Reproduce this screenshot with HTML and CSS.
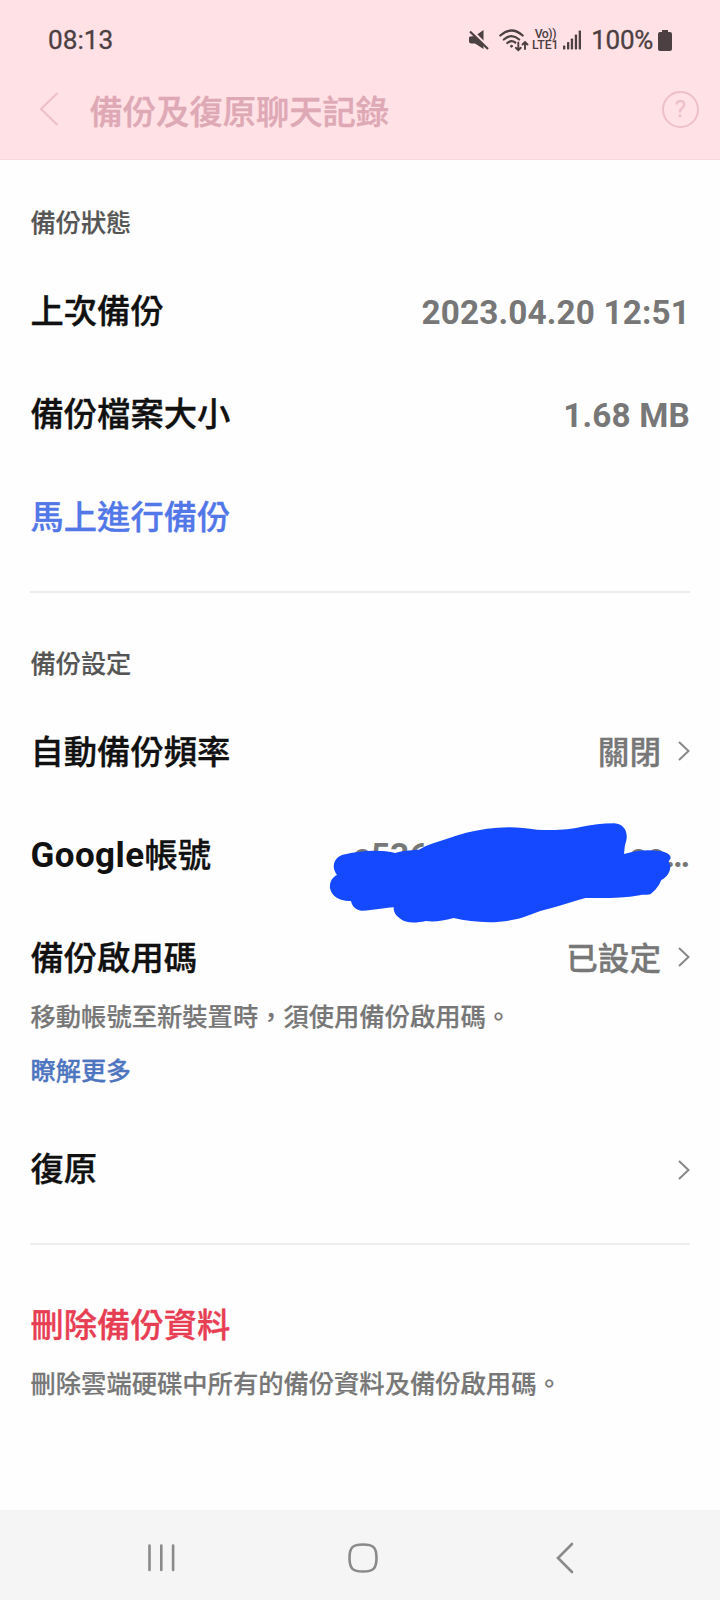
FILE: index.html
```html
<!DOCTYPE html>
<html lang="zh-Hant">
<head>
<meta charset="utf-8">
<title>備份及復原聊天記錄</title>
<link rel="stylesheet" href="styles.css">
</head>
<body>
<header class="header">
  <div class="status">
    <span class="clock">08:13</span>
    <div class="indicators">
      <svg class="mute" width="20" height="20" viewBox="0 0 20 20"><path d="M1 6.500L6 6L14.500 0v19L6 13.500H2.500Q0 13.500 0 11V7.500z" fill="#4d4042"/><path d="M2 0L20 18" stroke="#ffe1e6" stroke-width="3"/><path d="M1 1.500L19 19" stroke="#4d4042" stroke-width="2.200"/></svg>
      <svg class="wifi" width="30" height="23" viewBox="0 0 30 23" fill="none" stroke="#4d4042" stroke-width="2.200" stroke-linecap="round"><path d="M1.300 6.500Q12.500-3.500 23.700 6.500M4.800 10.500Q12.500 3.800 20.200 10.500M8.300 14Q12.500 10.700 16.300 13.500"/><circle cx="12.500" cy="17.200" r="1" fill="#4d4042" stroke-width="1"/><path d="M19.300 13.500V21M16.800 18.800L19.300 21.200L21.800 18.800M26 20V13.300M23.500 15.500L26 13L28.500 15.500" stroke-width="1.900"/></svg>
      <span class="volte"><span class="vo">Vo))</span><span>LTE1</span></span>
      <svg class="signal" width="18" height="20" viewBox="0 0 18 20" fill="#4d4042"><rect y="15.500" width="2.300" height="4" rx=".7"/><rect x="4" y="12" width="2.300" height="7.500" rx=".7"/><rect x="7.800" y="8.500" width="2.300" height="11" rx=".7"/><rect x="11.800" y="4.500" width="2.300" height="15" rx=".7"/><rect x="15.700" y=".5" width="2.300" height="19" rx=".7"/></svg>
      <span class="percent">100%</span>
      <svg class="battery" width="14" height="21" viewBox="0 0 14 21" fill="#4d4042"><path d="M4 0h6v2h2q2 0 2 2v15q0 2-2 2H2q-2 0-2-2V4q0-2 2-2h2z"/></svg>
    </div>
  </div>
  <div class="titlebar">
    <svg class="back" width="20" height="34" viewBox="0 0 20 34" fill="none" stroke="#efc0ca" stroke-width="2.200"><path d="M18.500 1L2 17L18.500 33"/></svg>
    <h1 class="title">備份及復原聊天記錄</h1>
    <span class="help">?</span>
  </div>
</header>
<main class="content">
  <section class="section">
    <h2 class="label">備份狀態</h2>
    <div class="rows">
      <div class="row"><span>上次備份</span><span class="value num">2023.04.20 12:51</span></div>
      <div class="row"><span>備份檔案大小</span><span class="value num">1.68 MB</span></div>
      <div class="row action">馬上進行備份</div>
    </div>
  </section>
  <section class="section settings">
    <h2 class="label">備份設定</h2>
    <div class="rows">
      <div class="row"><span>自動備份頻率</span><span class="value link">關閉<svg class="chevron" width="12" height="20" viewBox="0 0 12 20"><path d="M1 1L10.500 10L1 19"/></svg></span></div>
      <div class="row account"><span><span class="latin">Google</span>帳號</span><span class="value masked"><span>e536</span><span>co…</span></span>
        <svg class="scribble" viewBox="50 360 1050 320"><path d="M80 525C60 500 72 468 105 463C150 452 210 448 255 459C285 450 310 450 326 449C350 435 380 426 415 415C450 401 490 392 530 386C580 379 630 380 680 389C735 392 780 389 810 381C845 375 875 370 912 370C942 372 955 398 947 425C942 438 943 448 941 462C975 452 1010 447 1045 453C1068 455 1085 465 1080 477C1074 483 1074 487 1079 494C1083 512 1070 532 1053 540C1045 560 1035 570 1020 583C1010 586 1000 582 988 586C935 596 875 594 825 594C780 606 735 622 690 633C655 646 635 655 600 661C540 672 480 665 430 654C395 664 370 666 346 663C315 670 285 670 268 655C253 643 250 635 250 622C220 623 190 632 155 632C138 631 125 620 122 603C90 605 64 590 59 565C57 545 67 531 80 525Z"/></svg>
      </div>
      <div class="row"><span>備份啟用碼</span><span class="value link">已設定<svg class="chevron" width="12" height="20" viewBox="0 0 12 20"><path d="M1 1L10.500 10L1 19"/></svg></span></div>
    </div>
    <p class="note">移動帳號至新裝置時，須使用備份啟用碼。</p>
    <a class="more">瞭解更多</a>
    <div class="row restore"><span>復原</span><svg class="chevron" width="12" height="20" viewBox="0 0 12 20"><path d="M1 1L10.500 10L1 19"/></svg></div>
  </section>
  <section class="section removal">
    <div class="row danger">刪除備份資料</div>
    <p class="note">刪除雲端硬碟中所有的備份資料及備份啟用碼。</p>
  </section>
</main>
<nav class="nav">
  <svg width="28" height="30" viewBox="0 0 28 30"><path d="M2.500 2.500V27M14.300 2.500V27M26.100 2.500V27"/></svg>
  <svg class="home" width="30" height="30" viewBox="0 0 30 30"><path d="M15 1.500C25 1.500 28.500 4 28.500 15S25 28.500 15 28.500S1.500 26 1.500 15S5 1.500 15 1.500Z"/></svg>
  <svg width="18" height="32" viewBox="0 0 18 32"><path d="M16 2L2 16L16 30"/></svg>
</nav>
</body>
</html>
```
FILE: styles.css
```css
* { box-sizing: border-box; }
body {
  margin: 0;
  height: 1600px;
  display: flex;
  flex-direction: column;
  background: #fefefe;
  color: #111;
  font-family: Roboto, "Noto Sans CJK TC", sans-serif;
}
h1, h2, p { margin: 0; font-weight: 500; }
svg { display: block; flex: none; }
.header { height: 160px; background: #ffe1e6; border-bottom: 1px solid #f9d9df; }
.status {
  height: 80px;
  padding: 0 48px;
  display: flex;
  align-items: center;
  justify-content: space-between;
  color: #4d4042;
}
.clock { font-size: 26.2px; line-height: 32px; -webkit-text-stroke: .3px; }
.indicators { display: flex; align-items: center; }
.wifi { margin-left: 10px; }
.volte {
  margin-left: 3px;
  width: 26px;
  display: flex;
  flex-direction: column;
  align-items: center;
  font-size: 12.3px;
  line-height: 11.5px;
  font-weight: 500;
}
.vo { letter-spacing: -.5px; }
.signal { margin-left: 5px; }
.percent { margin-left: 10px; font-size: 26px; line-height: 32px; letter-spacing: -.3px; -webkit-text-stroke: .3px; }
.battery { margin-left: 5px; }
.titlebar { height: 60px; display: flex; align-items: center; padding: 0 21px 2px 39px; }
.title {
  margin-left: 30.500px;
  padding-top: 7px;
  flex: 1;
  font-size: 33.3px;
  line-height: 50px;
  color: #dea8b5;
  -webkit-text-stroke: .4px;
}
.help {
  width: 37px;
  height: 37px;
  border: 2.5px solid #efc0ca;
  border-radius: 50%;
  text-align: center;
  font-size: 24px;
  line-height: 33px;
  color: #efc0ca;
  -webkit-text-stroke: .3px;
}
.content { flex: 1; padding: 33px 30px 0; }
.section { border-bottom: 2px solid #ededed; height: 400px; }
.label { padding-left: .5px; font-size: 25.2px; line-height: 61px; color: #555; -webkit-text-stroke: .2px; }
.rows { margin-top: 28px; display: flex; flex-direction: column; gap: 43px; }
.row {
  height: 60px;
  padding-left: .5px;
  display: flex;
  align-items: center;
  justify-content: space-between;
  font-size: 33.3px;
  line-height: 60px;
  font-weight: 500;
  -webkit-text-stroke: .35px;
}
.value { color: #777; }
.num { padding-top: 1px; font-weight: 700; letter-spacing: .15px; -webkit-text-stroke: 0; }
.latin { font-size: 35px; font-weight: 700; letter-spacing: .4px; -webkit-text-stroke: 0; }
.action { color: #5277e8; }
.link { display: flex; align-items: center; font-size: 31.6px; gap: 17px; padding-top: 1px; }
.chevron { fill: none; stroke: #888; stroke-width: 2; }
.link .chevron { margin-bottom: 5px; }
.settings { height: 652px; padding-top: 41px; }
.account { position: relative; }
.masked { width: 337px; display: flex; justify-content: space-between; font-weight: 700; -webkit-text-stroke: 0; }
.scribble { position: absolute; right: 13.3px; top: -6px; width: 350px; height: 106.7px; fill: #1549ff; }
.note { margin-top: 9px; padding-left: .5px; font-size: 25.3px; line-height: 40px; color: #777; -webkit-text-stroke: .2px; }
.more { display: block; margin-top: 14px; padding-left: .5px; font-size: 25.2px; line-height: 40px; font-weight: 500; color: #4e75bf; -webkit-text-stroke: .3px; }
.restore { margin-top: 48px; }
.removal { border: 0; padding-top: 51px; height: auto; }
.danger { color: #e83e54; }
.nav {
  height: 90px;
  padding: 5px 146px 0 147px;
  background: #f5f5f5;
  display: flex;
  align-items: center;
  justify-content: space-between;
}
.nav svg { fill: none; stroke: #8a8a8a; stroke-width: 2.6; stroke-linecap: round; }
.nav .home { margin-right: 6px; }
```
